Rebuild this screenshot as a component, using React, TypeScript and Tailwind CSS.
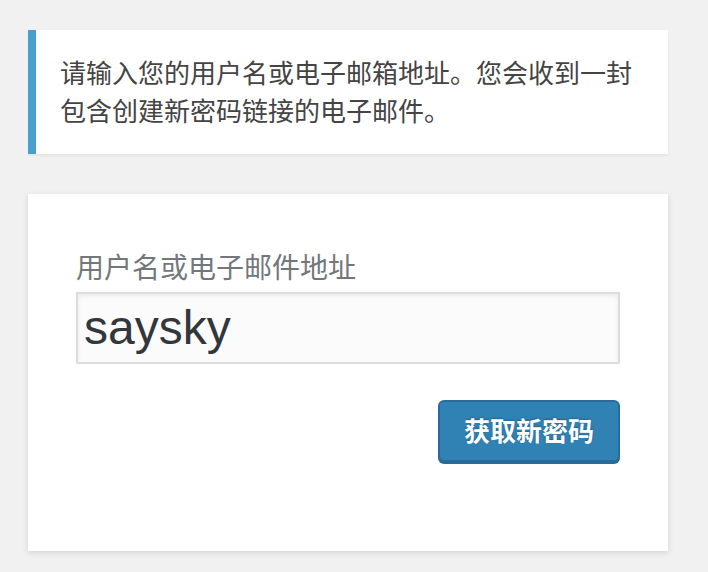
export default function App() {
  const font = "font-['Noto_Sans','Noto_Sans_CJK_SC',sans-serif]"
  return (
    <div className={`min-h-screen bg-[#f1f1f1] ${font}`}>
      <div className="pt-[30px] px-[28px] w-[696px]">
        {/* Message */}
        <div className="bg-white border-l-[8px] border-[#46a0d0] pl-[24px] pr-[24px] py-[24px] shadow-[0_2px_2px_rgba(0,0,0,0.05)]">
          <p className="text-[26px] leading-[38px] text-[#444]">
            请输入您的用户名或电子邮箱地址。您会收到一封包含创建新密码链接的电子邮件。
          </p>
        </div>

        {/* Form */}
        <div className="mt-[40px] bg-white px-[48px] pt-[52px] pb-[89px] shadow-[0_2px_6px_rgba(0,0,0,0.13)]">
          <label className="block text-[28px] leading-[42px] text-[#72777c]">用户名或电子邮件地址</label>
          <input
            type="text"
            defaultValue="saysky"
            className="mt-[4px] block w-[544px] h-[72px] border-[2px] border-[#ddd] bg-[#fbfbfb] px-[6px] font-['Liberation_Sans','Noto_Sans_CJK_SC',sans-serif] text-[48px] text-[#32373c] outline-none shadow-[inset_0_2px_4px_rgba(0,0,0,0.07)]"
          />
          <div className="mt-[36px] flex justify-end w-[544px]">
            <button className="h-[62px] w-[182px] rounded-[6px] border-[2px] border-[#2a6c99] bg-[#3182b4] text-[26px] font-bold text-white shadow-[0_2px_0_#2a6c99] [text-shadow:0_-1px_2px_#22618d]">
              获取新密码
            </button>
          </div>
        </div>
      </div>
    </div>
  )
}
